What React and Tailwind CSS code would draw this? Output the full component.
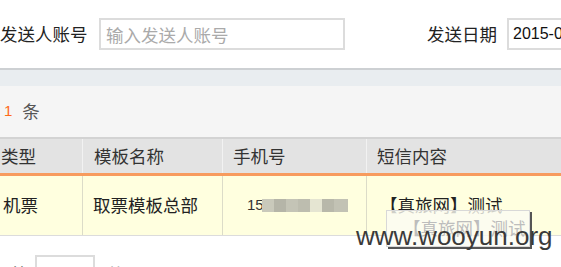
import React from 'react';

const cjk = { fontFamily: '"Noto Sans CJK SC", "Liberation Sans", sans-serif' };

const App = () => {
  return (
    <div className="relative w-[561px] h-[267px] overflow-hidden bg-white text-[17.5px] text-[#222]" style={cjk}>
      {/* search bar */}
      <div className="flex items-center h-[68px] whitespace-nowrap">
        <span className="w-[99px] shrink-0 leading-none">发送人账号</span>
        <input
          className="w-[246px] h-[32px] shrink-0 border-2 border-[#dcdcdc] px-[5px] text-[17.5px] outline-none placeholder:text-[#aaa]"
          placeholder="输入发送人账号"
          style={cjk}
        />
        <span className="ml-[82px] w-[80px] shrink-0 leading-none">发送日期</span>
        <input
          className="w-[110px] h-[32px] shrink-0 border-2 border-[#dcdcdc] px-[4px] text-[16px] text-[#111] outline-none"
          defaultValue="2015-09-01"
          style={{ fontFamily: '"Liberation Sans", sans-serif' }}
        />
      </div>

      <div className="h-[2px] bg-[#cdd0d3]" />
      <div className="h-[16px] bg-[#e9edf0]" />
      <div className="flex items-center h-[51px] bg-[#f5f5f5] pl-[4px]">
        <span className="text-[#ff6a1a] text-[15px]" style={{ fontFamily: '"Liberation Sans", sans-serif' }}>1</span>
        <span className="ml-[10px] text-[#555]">条</span>
      </div>
      <div className="h-[2px] bg-[#d3d3d3]" />

      {/* table header */}
      <div className="flex h-[34px] bg-[#e3e3e3] text-[#333]">
        <div className="w-[83px] shrink-0 flex items-center pl-[1px] border-r border-[#f2f2f2]">类型</div>
        <div className="w-[140px] shrink-0 flex items-center pl-[11px] border-r border-[#f2f2f2]">模板名称</div>
        <div className="w-[144px] shrink-0 flex items-center pl-[10px] border-r border-[#f2f2f2]">手机号</div>
        <div className="flex-1 flex items-center pl-[10px]">短信内容</div>
      </div>
      <div className="h-[3px] bg-[#f79b5e]" />

      {/* table row */}
      <div className="flex h-[60px] bg-[#ffffdf] text-[#222] border-b border-[#dcdcdc]">
        <div className="w-[83px] shrink-0 flex items-center pl-[3px] border-r border-[#dcdcc8]">机票</div>
        <div className="w-[140px] shrink-0 flex items-center pl-[10px] border-r border-[#dcdcc8]">取票模板总部</div>
        <div className="w-[144px] shrink-0 flex items-center pl-[24px] border-r border-[#dcdcc8]">
          <span className="text-[15px] text-[#333]" style={{ fontFamily: '"Liberation Sans", sans-serif' }}>15</span>
          <span className="flex ml-[-2px] h-[13px]">
            <span className="w-[12px] bg-[#c9c9bb]" />
            <span className="w-[12px] bg-[#b5b5a8]" />
            <span className="w-[12px] bg-[#c4c4b6]" />
            <span className="w-[12px] bg-[#bdbdaf]" />
            <span className="w-[12px] bg-[#e5e5d2]" />
            <span className="w-[12px] bg-[#b8b8aa]" />
            <span className="w-[14px] bg-[#c2c2b4]" />
          </span>
        </div>
        <div className="flex-1 flex items-center pl-[13px] pb-[1px] whitespace-nowrap">【真旅网】测试</div>
      </div>

      {/* pagination (cut off at the bottom edge) */}
      <div className="flex items-start pt-[29px] whitespace-nowrap text-[#333]">
        <span className="ml-[11px] leading-none">第</span>
        <span className="ml-[6px] mt-[-10px] w-[60px] h-[30px] shrink-0 border-2 border-[#dcdcdc] bg-white" />
        <span className="ml-[12px] leading-none text-[#777]">共</span>
        <span className="ml-[26px] leading-none">页</span>
      </div>

      {/* tooltip */}
      <div className="absolute left-[386px] top-[210px] w-[144px] h-[37px] border border-[#d8d8d8] bg-[#fbfbf3]/80 shadow-[2px_2px_0_#555] flex items-center pl-[16px] whitespace-nowrap text-[#bdbdbd]">
        【真旅网】测试
      </div>

      {/* watermark */}
      <div
        className="absolute left-[356px] top-[223px] text-[26px] leading-none text-[#3a3a3a]"
        style={{ fontFamily: '"Liberation Sans", sans-serif' }}
      >
        www.wooyun.org
      </div>
    </div>
  );
};

export default App;
